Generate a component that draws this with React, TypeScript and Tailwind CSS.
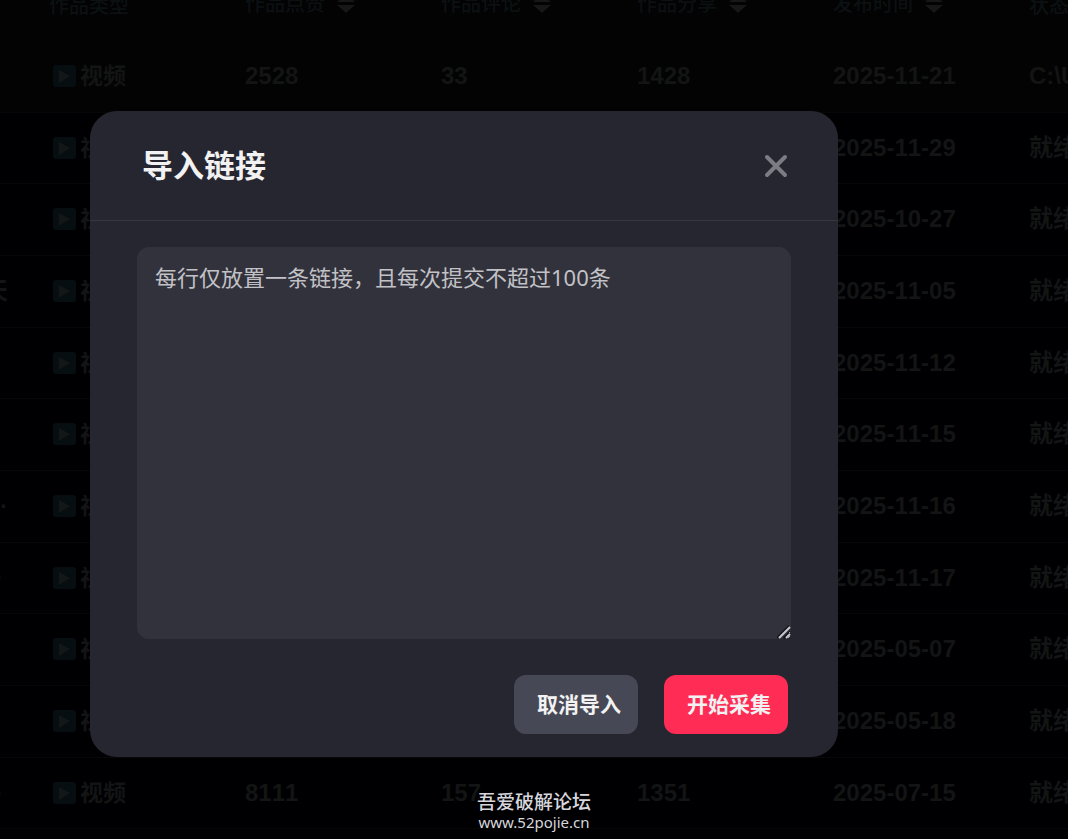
import { useState } from "react";

type Work = {
  tail: string;
  likes: number;
  comments: number;
  shares: number;
  date: string;
  status: string;
};

const works: Work[] = [
  { tail: "", likes: 2528, comments: 33, shares: 1428, date: "2025-11-21", status: "C:\\Users" },
  { tail: "", likes: 1904, comments: 61, shares: 872, date: "2025-11-29", status: "就绪" },
  { tail: "", likes: 3310, comments: 84, shares: 1206, date: "2025-10-27", status: "就绪" },
  { tail: "天", likes: 2745, comments: 52, shares: 964, date: "2025-11-05", status: "就绪" },
  { tail: "", likes: 1188, comments: 29, shares: 503, date: "2025-11-12", status: "就绪" },
  { tail: "", likes: 4021, comments: 97, shares: 1633, date: "2025-11-15", status: "就绪" },
  { tail: "··", likes: 2267, comments: 45, shares: 781, date: "2025-11-16", status: "就绪" },
  { tail: "·\u2009", likes: 1539, comments: 38, shares: 690, date: "2025-11-17", status: "就绪" },
  { tail: "", likes: 5172, comments: 120, shares: 1847, date: "2025-05-07", status: "就绪" },
  { tail: "", likes: 3806, comments: 73, shares: 1092, date: "2025-05-18", status: "就绪" },
  { tail: "·\u2009", likes: 8111, comments: 157, shares: 1351, date: "2025-07-15", status: "就绪" },
];

const columns = [
  { label: "作品类型", sortable: false },
  { label: "作品点赞", sortable: true },
  { label: "作品评论", sortable: true },
  { label: "作品分享", sortable: true },
  { label: "发布时间", sortable: true },
  { label: "状态", sortable: false },
];

function SortIcon() {
  return (
    <svg width="18" height="20" viewBox="0 0 18 20" fill="#171717" aria-hidden="true">
      <path d="M9 0l9 8H0zM0 11h18l-9 8z" />
    </svg>
  );
}

function PlayIcon() {
  return (
    <svg width="23" height="23" viewBox="0 0 23 23" aria-hidden="true">
      <rect width="23" height="22" rx="3" fill="#070e11" />
      <path d="M6 5l11 6-11 7z" fill="#141718" />
    </svg>
  );
}

function WorksTable() {
  return (
    <table className="-mt-8 w-max table-fixed border-collapse whitespace-nowrap text-left [font-kerning:none]">
      <colgroup>
        <col className="w-[33px]" />
        <col className="w-[196px]" />
        <col className="w-[196px]" />
        <col className="w-[196px]" />
        <col className="w-[196px]" />
        <col className="w-[196px]" />
        <col className="w-[196px]" />
      </colgroup>
      <thead className="bg-[#030303] text-[20px] font-medium text-[#0b1113]">
        <tr className="h-[72px]">
          <td />
          {columns.map((c) => (
            <th key={c.label} scope="col" className="p-0 pl-4 font-medium">
              {c.sortable ? (
                <span className="flex items-center gap-3">
                  {c.label}
                  <SortIcon />
                </span>
              ) : (
                <span className="block pt-1">{c.label}</span>
              )}
            </th>
          ))}
        </tr>
      </thead>
      <tbody className="text-[24px] font-bold text-[#131414]">
        {works.map((w) => (
          <tr
            key={w.date}
            className="h-[72px] border-b border-[#070708] first:bg-[#030303] nth-[3n+2]:h-[71px]"
          >
            <td className="max-w-[33px] p-0 pr-[25px]">
              <span className="flex justify-end whitespace-pre">{w.tail}</span>
            </td>
            <td className="p-0 pl-5">
              <span className="flex items-center gap-1 pt-px text-[23px]">
                <PlayIcon />
                视频
              </span>
            </td>
            <td className="p-0 pl-4">{w.likes}</td>
            <td className="p-0 pl-4">{w.comments}</td>
            <td className="p-0 pl-4">{w.shares}</td>
            <td className="p-0 pl-4">{w.date}</td>
            <td className="p-0 pl-4">{w.status}</td>
          </tr>
        ))}
      </tbody>
    </table>
  );
}

function ResizeGrip() {
  return (
    <svg
      className="pointer-events-none absolute right-0 bottom-0"
      width="14"
      height="14"
      viewBox="0 0 14 14"
      fill="none"
      aria-hidden="true"
    >
      <path d="M0 13L12 1M7 13l5-5" stroke="#14141a" strokeWidth="2" />
      <path d="M2 13L13 2M9 13l4-4" stroke="#c8c8cc" strokeWidth="2" />
    </svg>
  );
}

function ImportDialog({ onClose }: { onClose: () => void }) {
  const [links, setLinks] = useState("");

  return (
    <div className="absolute inset-0 pt-[111px] pr-[230px] pl-[90px]">
      <div
        role="dialog"
        aria-modal="true"
        aria-labelledby="import-title"
        className="rounded-[27px] bg-[#262631]"
      >
        <div className="flex items-center justify-between border-b border-[#373741] py-8 pr-[50px] pl-[52px]">
          <h2 id="import-title" className="text-[31px] leading-[45px] font-bold text-[#f2f2f2]">
            导入链接
          </h2>
          <button type="button" aria-label="关闭" onClick={onClose} className="text-[#7c7c85]">
            <svg width="24" height="24" viewBox="0 0 24 24" fill="none" stroke="currentColor" strokeWidth="4" strokeLinecap="round">
              <path d="M3 3l18 18M21 3L3 21" />
            </svg>
          </button>
        </div>

        <div className="px-[47px] pt-[26px] pb-[23px]">
          <div className="relative">
            <textarea
              aria-label="导入链接"
              value={links}
              onChange={(e) => setLinks(e.target.value)}
              placeholder="每行仅放置一条链接，且每次提交不超过100条"
              className="block h-[392px] w-full resize-y rounded-xl bg-[#32323d] px-[18px] py-[14px] text-[22px] leading-8 text-[#e5e5e8] outline-none placeholder:text-[#c2c2c6]"
            />
            <ResizeGrip />
          </div>
          <div className="mt-9 flex justify-end gap-[26px] pr-[3px] text-[21px] font-bold text-[#f2f2f2]">
            <button type="button" onClick={onClose} className="h-[59px] w-[124px] rounded-xl bg-[#474855] pl-[6px]">
              取消导入
            </button>
            <button type="button" className="h-[59px] w-[124px] rounded-xl bg-[#ff2c55] pl-[6px]">
              开始采集
            </button>
          </div>
        </div>
      </div>
    </div>
  );
}

export default function App() {
  const [open, setOpen] = useState(true);

  return (
    <div
      lang="zh-CN"
      className="relative flow-root min-h-screen overflow-hidden bg-[#000002] font-['Liberation_Sans','Noto_Sans_CJK_SC',sans-serif]"
    >
      <div className="h-screen overflow-hidden">
        <WorksTable />
      </div>
      <div className="font-['Noto_Sans','Noto_Sans_CJK_SC',sans-serif]">
        {open && <ImportDialog onClose={() => setOpen(false)} />}
        <div className="pointer-events-none absolute inset-x-0 bottom-[7px] text-center text-[#d6d6dc]">
          <p className="text-[19px] leading-5 font-medium">吾爱破解论坛</p>
          <p className="text-[15px] leading-5">www.52pojie.cn</p>
        </div>
      </div>
    </div>
  );
}
